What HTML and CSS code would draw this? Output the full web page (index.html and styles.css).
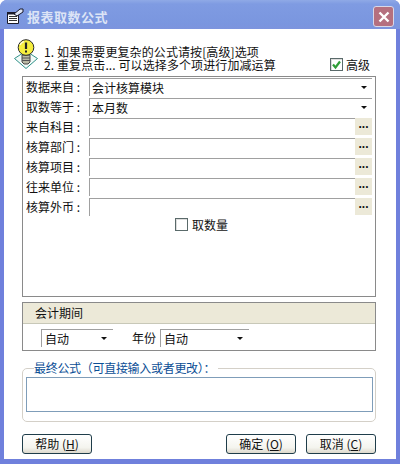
FILE: index.html
```html
<!DOCTYPE html>
<html lang="zh-CN">
<head>
<meta charset="utf-8">
<title>报表取数公式</title>
<link rel="stylesheet" href="styles.css">
</head>
<body>
<div class="window">
  <header class="titlebar">
    <svg class="app-icon" width="18" height="16" viewBox="0 0 18 16">
      <path d="M1.5 4.5h11v11h-11z" fill="#fff" stroke="#1a1a2a"/>
      <path d="M1 4h12v2.5H1z" fill="#1a1a2a"/>
      <path d="M3 8.5h8M3 10.5h8M3 12.5h8" stroke="#333"/>
      <path d="M8 6l6-5h3v3l-6 4z" fill="#dfe6f7" stroke="#1a1a2a"/>
    </svg>
    <span class="title-text">报表取数公式</span>
    <span class="close">
      <svg width="12" height="12" viewBox="0 0 12 12"><path d="M1.5 1.5l9 9M10.5 1.5l-9 9" stroke="#fff" stroke-width="2.4"/></svg>
    </span>
  </header>
  <main class="client">
    <section class="hint">
      <svg class="bulb" width="24" height="30" viewBox="0 0 24 30">
        <path d="M12 12L23.5 19.5 12 29.5 .5 19.5z" fill="#f2fbf9" stroke="#2f9088"/>
        <path d="M8 16h8v7l-2 2h-4l-2-2z" fill="#b9b9a4" stroke="#444"/>
        <path d="M8 19h8M8 21.500h8" stroke="#555"/>
        <circle cx="12" cy="8.500" r="7.800" fill="#f6ee3e" stroke="#2a2a2a"/>
        <path d="M6 6a6 6 0 0 1 4-3.500" fill="none" stroke="#fffbd0" stroke-width="1.500"/>
        <path d="M12 3.500v6.500" stroke="#222" stroke-width="2.200"/>
        <path d="M11 11.500h2v2h-2z" fill="#222"/>
      </svg>
      <div class="hint-text">
        <p>1. 如果需要更复杂的公式请按[高级]选项</p>
        <p>2. 重复点击... 可以选择多个项进行加减运算</p>
      </div>
      <label class="advanced">
        <span class="check checked">
          <svg width="11" height="11" viewBox="0 0 11 11"><path d="M2 5.500l2.500 3L9 2.500" fill="none" stroke="#2f9e38" stroke-width="2.200"/></svg>
        </span>高级
      </label>
    </section>

    <section class="form-panel">
      <div class="row"><span class="label">数据来自 :</span><div class="field"><span class="value">会计核算模块</span><i class="arrow"></i></div></div>
      <div class="row"><span class="label">取数等于 :</span><div class="field"><span class="value">本月数</span><i class="arrow"></i></div></div>
      <div class="row"><span class="label">来自科目 :</span><div class="field"></div><span class="more">...</span></div>
      <div class="row"><span class="label">核算部门 :</span><div class="field"></div><span class="more">...</span></div>
      <div class="row"><span class="label">核算项目 :</span><div class="field"></div><span class="more">...</span></div>
      <div class="row"><span class="label">往来单位 :</span><div class="field"></div><span class="more">...</span></div>
      <div class="row"><span class="label">核算外币 :</span><div class="field"></div><span class="more">...</span></div>
      <label class="quantity"><span class="check"></span>取数量</label>
    </section>

    <section class="period">
      <div class="period-head">会计期间</div>
      <div class="period-body">
        <div class="select select-month"><span>自动</span><i class="arrow"></i></div>
        <span class="year-label">年份</span>
        <div class="select select-year"><span>自动</span><i class="arrow"></i></div>
      </div>
    </section>

    <fieldset class="formula">
      <legend>最终公式（可直接输入或者更改）：</legend>
      <div class="formula-input"></div>
    </fieldset>

    <footer class="actions">
      <button class="btn" type="button">帮助 (<u>H</u>)</button>
      <span class="spacer"></span>
      <button class="btn" type="button">确定 (<u>O</u>)</button>
      <button class="btn" type="button">取消 (<u>C</u>)</button>
    </footer>
  </main>
</div>
</body>
</html>
```
FILE: styles.css
```css
* { box-sizing: border-box; }
html, body { margin: 0; padding: 0; }
body {
  width: 400px;
  height: 464px;
  overflow: hidden;
  background: #fff;
  font-family: "Noto Sans CJK SC", "Liberation Sans", sans-serif;
  font-size: 12px;
  color: #111;
}
.window {
  width: 400px;
  height: 464px;
  display: flex;
  flex-direction: column;
  background: #6f80dc;
  border-radius: 7px 7px 0 0;
  padding: 0 4px 5px 4px;
}
.titlebar {
  height: 29px;
  margin: 0 -4px;
  padding: 3px 6px 0 6px;
  display: flex;
  align-items: center;
  background: linear-gradient(#8fa9e6 0, #7f9be2 4px, #7a96df 24px, #7d94de 100%);
  border-radius: 7px 7px 0 0;
}
.app-icon { flex: none; }
.title-text {
  margin-left: 3px;
  font-size: 13px;
  font-weight: 700;
  letter-spacing: 0.5px;
  color: #dce4f6;
}
.close {
  margin: 1px 0 0 auto;
  width: 21px;
  height: 21px;
  display: flex;
  align-items: center;
  justify-content: center;
  background: #b5707f;
  border: 1px solid #d8d8e8;
  border-radius: 3px;
}
.client {
  flex: 1;
  min-height: 0;
  display: flex;
  flex-direction: column;
  padding: 0 20px 0 18px;
  background: #fff;
}
.hint {
  height: 47px;
  flex: none;
  display: flex;
  align-items: flex-start;
  padding-top: 9px;
}
.bulb { flex: none; margin-left: -8px; margin-top: 1px; }
.hint-text { margin: 7px 0 0 6px; line-height: 13px; letter-spacing: 0.1px; }
.hint-text p { margin: 0; white-space: nowrap; }
.advanced {
  margin: 19px 6px 0 auto;
  display: flex;
  align-items: center;
  gap: 3px;
  height: 14px;
}
.check {
  display: inline-flex;
  align-items: center;
  justify-content: center;
  width: 13px;
  height: 13px;
  background: #fff;
  border: 1px solid #5a6a6a;
  box-shadow: inset 1px 1px 0 #ddd;
}
.form-panel {
  flex: none;
  height: 221px;
  border: 1px solid #8a8a8a;
  padding: 1px 3px 0 3px;
  background: #fff;
}
.row {
  height: 20px;
  display: flex;
  align-items: flex-start;
}
.label { width: 63px; flex: none; line-height: 18px; white-space: nowrap; }
.field {
  flex: 1;
  height: 18px;
  border-top: 1px solid #a0a0a0;
  border-left: 1px solid #a0a0a0;
  display: flex;
  align-items: center;
  padding: 0 5px 0 2px;
  min-width: 0;
}
.value { line-height: 16px; }
.arrow {
  margin-left: auto;
  width: 0;
  height: 0;
  border-left: 3px solid transparent;
  border-right: 3px solid transparent;
  border-top: 3px solid #111;
}
.more {
  flex: none;
  width: 17px;
  height: 17px;
  background: #ece9d8;
  text-align: center;
  font: 700 12px/13px "Liberation Sans", sans-serif;
  color: #111;
}
.quantity {
  display: flex;
  align-items: center;
  justify-content: center;
  gap: 4px;
  margin: -2px 0 0 5px;
  height: 16px;
}
.period {
  flex: none;
  height: 49px;
  margin-top: 5px;
  border: 1px solid #8a8a8a;
}
.period-head {
  height: 21px;
  background: #ece9d8;
  border-bottom: 1px solid #c8c8b8;
  padding-left: 12px;
  line-height: 20px;
}
.period-body {
  display: flex;
  align-items: flex-start;
  padding: 5px 0 0 18px;
}
.select {
  height: 18px;
  border-top: 1px solid #a0a0a0;
  border-left: 1px solid #a0a0a0;
  display: flex;
  align-items: center;
  padding: 0 6px 0 3px;
}
.select-month { width: 72px; }
.select-year { width: 89px; }
.year-label { margin-left: 19px; margin-right: 4px; line-height: 18px; }
.formula {
  flex: none;
  height: 62px;
  margin: 9px 0 0;
  padding: 0 2px 0 3px;
  border: 1px solid #d4d0c8;
  border-radius: 5px;
  min-width: 0;
}
.formula legend {
  color: #0c4f96;
  padding: 0 3px 0 0;
  margin-left: 8px;
  line-height: 16px;
  letter-spacing: -0.3px;
}
.formula-input {
  height: 35px;
  margin-top: 1px;
  background: #fff;
  border: 1px solid #7f9db9;
}
.actions {
  flex: none;
  display: flex;
  gap: 10px;
  margin-top: 12px;
}
.spacer { flex: 1; }
.btn {
  width: 70px;
  height: 20px;
  padding: 0;
  font: inherit;
  line-height: 18px;
  color: #111;
  background: linear-gradient(#fff, #f4f4ee 70%, #dcd8cc);
  border: 1px solid #1f3d4a;
  border-radius: 3px;
}
```
